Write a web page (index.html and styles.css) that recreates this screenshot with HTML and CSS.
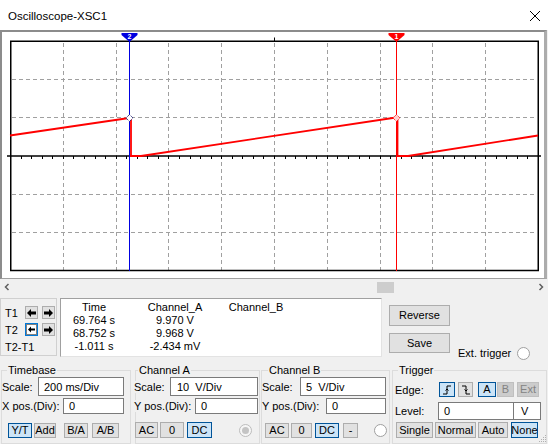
FILE: index.html
```html
<!DOCTYPE html>
<html>
<head>
<meta charset="utf-8">
<title>Oscilloscope-XSC1</title>
<link rel="stylesheet" href="styles.css">
</head>
<body>
<div class="window">
  <div class="titlebar">
    <span class="title">Oscilloscope-XSC1</span>
    <svg class="close" width="10" height="10" viewBox="0 0 10 10"><path d="M0 0L10 10M10 0L0 10" stroke="#000" stroke-width="1"/></svg>
  </div>

  <div class="scope">
    <svg class="plot" width="542" height="246" viewBox="2 32 542 246">
      <g stroke="#a0a0a0" stroke-width="1" stroke-dasharray="4 3" fill="none" shape-rendering="crispEdges">
        <path d="M63.5 43V270M116.5 43V270M168.5 43V270M221.5 43V270M274.5 43V270M327.5 43V270M380.5 43V270M432.5 43V270M485.5 43V270"/>
        <path d="M12 79.5H537M12 117.5H537M12 194.5H537M12 232.5H537"/>
      </g>
      <rect x="10.75" y="41.25" width="527.5" height="229.25" fill="none" stroke="#000" stroke-width="1.5"/>
      <path d="M7 156H541" stroke="#000" stroke-width="1.5"/>
      <path stroke="#000" stroke-width="1" shape-rendering="crispEdges" d="M21.1 156v3M31.6 156v3M42.2 156v3M52.7 156v3M63.3 156v3M73.9 156v3M84.4 156v3M95 156v3M105.5 156v3M116.1 156v3M126.7 156v3M137.2 156v3M147.8 156v3M158.3 156v3M168.9 156v3M179.5 156v3M190 156v3M200.6 156v3M211.1 156v3M221.7 156v3M232.3 156v3M242.8 156v3M253.4 156v3M263.9 156v3M274.5 156v3M285.1 156v3M295.6 156v3M306.2 156v3M316.7 156v3M327.3 156v3M337.9 156v3M348.4 156v3M359 156v3M369.5 156v3M380.1 156v3M390.7 156v3M401.2 156v3M411.8 156v3M422.3 156v3M432.9 156v3M443.5 156v3M454 156v3M464.6 156v3M475.1 156v3M485.7 156v3M496.3 156v3M506.8 156v3M517.4 156v3M527.9 156v3M538.5 155v4"/>
      <path d="M274.5 37.5V41" stroke="#000" stroke-width="1"/>

      <path d="M129.5 35V271" stroke="#0000e0" stroke-width="1"/>
      <path d="M396.5 35V271" stroke="#ff0000" stroke-width="1"/>

      <g stroke="#ff0000" stroke-width="1.8" fill="none">
        <path d="M10 135.5L129 118"/>
        <path d="M131 118.5V156"/>
        <path d="M130 156H141L396 117.5"/>
        <path d="M397.5 117.5V156"/>
        <path d="M397 156H408L538 135.5"/>
      </g>

      <polygon points="129.5,114.5 133,118 129.5,121.5 126,118" fill="#fff" stroke="#000060" stroke-width="1" stroke-dasharray="1 1"/>
      <polygon points="396.5,114.5 400,118 396.5,121.5 393,118" fill="#ffd0d0" stroke="#ff0000" stroke-width="1" stroke-dasharray="1 1"/>

      <polygon points="121.5,33 137.5,33 137.5,35 130,41.5 129,41.5 121.5,35" fill="#0000e0"/>
      <text x="129.5" y="39" class="mk">2</text>
      <polygon points="388.5,33 404.5,33 404.5,35 397,41.5 396,41.5 388.5,35" fill="#ff0000"/>
      <text x="396.5" y="39" class="mk">1</text>
    </svg>
  </div>

  <div class="hscroll">
    <svg class="sb-btn" width="17" height="17" viewBox="0 0 17 17"><path d="M8.5 5L5.5 8L8.5 11" fill="none" stroke="#606060" stroke-width="1.5"/></svg>
    <div class="track"><div class="thumb"></div></div>
    <svg class="sb-btn" width="17" height="17" viewBox="0 0 17 17"><path d="M8.5 5L11.5 8L8.5 11" fill="none" stroke="#606060" stroke-width="1.5"/></svg>
  </div>

  <div class="cursors">
    <div class="cursor-ctrl">
      <div class="crow">
        <span class="clbl">T1</span>
        <span class="abtn"><svg width="9" height="8" viewBox="0 0 9 8"><path d="M0 4L4 0V2.5H9V5.5H4V8Z" fill="#000"/></svg></span>
        <span class="abtn gap"><svg width="9" height="8" viewBox="0 0 9 8"><path d="M9 4L5 0V2.5H0V5.5H5V8Z" fill="#000"/></svg></span>
      </div>
      <div class="crow r-t2">
        <span class="clbl">T2</span>
        <span class="abtn focus"><svg width="11" height="11" viewBox="0 0 11 11"><rect x="0.5" y="0.5" width="10" height="10" fill="none" stroke="#000" stroke-dasharray="1 1"/><path d="M2 5.5L5 2.5V4.5H9V6.5H5V8.5Z" fill="#000"/></svg></span>
        <span class="abtn gap"><svg width="9" height="8" viewBox="0 0 9 8"><path d="M9 4L5 0V2.5H0V5.5H5V8Z" fill="#000"/></svg></span>
      </div>
      <div class="crow r-diff">
        <span class="clbl wide">T2-T1</span>
      </div>
    </div>

    <div class="readout">
      <span>Time</span><span>Channel_A</span><span>Channel_B</span>
      <span>69.764 s</span><span>9.970 V</span><span></span>
      <span>68.752 s</span><span>9.968 V</span><span></span>
      <span>-1.011 s</span><span>-2.434 mV</span><span></span>
    </div>

    <div class="side">
      <div class="side-btns">
        <div class="btn reverse">Reverse</div>
        <div class="btn save">Save</div>
      </div>
      <div class="ext">
        <span>Ext. trigger</span>
        <span class="radio white"></span>
      </div>
    </div>
  </div>

  <div class="controls">
    <div class="group tb">
      <div class="legend">Timebase</div>
      <div class="row r1">
        <span class="lbl w36">Scale:</span>
        <div class="field w86 pad6">200 ms/Div</div>
      </div>
      <div class="row r2">
        <span class="lbl w61">X pos.(Div):</span>
        <div class="field w61 pad6">0</div>
      </div>
      <div class="row r3 h15 mt9">
        <div class="btn sel" style="margin-left:6px;width:24px">Y/T</div>
        <div class="btn" style="margin-left:2px;width:22px">Add</div>
        <div class="btn" style="margin-left:8px;width:24px">B/A</div>
        <div class="btn" style="margin-left:4px;width:27px">A/B</div>
      </div>
    </div>

    <div class="group cha">
      <div class="legend">Channel A</div>
      <div class="row r1">
        <span class="lbl w36 neg2">Scale:</span>
        <div class="field w88 pad7">10&nbsp; V/Div</div>
      </div>
      <div class="row r2">
        <span class="lbl w61 neg2">Y pos.(Div):</span>
        <div class="field w63 pad6">0</div>
      </div>
      <div class="row r3 h16 mt8">
        <div class="btn" style="margin-left:-1px;width:23px">AC</div>
        <div class="btn" style="margin-left:2px;width:24px">0</div>
        <div class="btn sel" style="margin-left:3px;width:25px">DC</div>
        <span class="radio grey" style="margin-left:27px"><span class="dot"></span></span>
      </div>
    </div>

    <div class="group chb">
      <div class="legend">Channel B</div>
      <div class="row r1">
        <span class="lbl w38">Scale:</span>
        <div class="field w86 pad6">5&nbsp; V/Div</div>
      </div>
      <div class="row r2">
        <span class="lbl w64">Y pos.(Div):</span>
        <div class="field w60 pad6">0</div>
      </div>
      <div class="row r3 h15 mt9">
        <div class="btn" style="margin-left:3px;width:24px">AC</div>
        <div class="btn" style="margin-left:2px;width:21px">0</div>
        <div class="btn sel" style="margin-left:3px;width:24px">DC</div>
        <div class="btn" style="margin-left:4px;width:15px">-</div>
        <span class="radio white" style="margin-left:16px"></span>
      </div>
    </div>

    <div class="group trg">
      <div class="legend">Trigger</div>
      <div class="row t1">
        <span class="lbl tl">Edge:</span>
        <div class="btn sel" style="width:16px"><svg width="10" height="10" viewBox="0 0 10 10"><path d="M1 9H5V1H9M3.5 5.5L5 4L6.5 5.5" fill="none" stroke="#000" stroke-width="1"/></svg></div>
        <div class="btn" style="margin-left:3px;width:15px"><svg width="10" height="10" viewBox="0 0 10 10"><path d="M1 1H5V9H9M3.5 4.5L5 6L6.5 4.5" fill="none" stroke="#000" stroke-width="1"/></svg></div>
        <div class="btn sel" style="margin-left:5px;width:18px">A</div>
        <div class="btn dis" style="margin-left:1px;width:17px">B</div>
        <div class="btn dis" style="margin-left:3px;width:22px">Ext</div>
      </div>
      <div class="row t2">
        <span class="lbl tl2">Level:</span>
        <div class="field w76 pad6">0</div>
        <div class="field vbox">V</div>
      </div>
      <div class="row r3 h16 mt2">
        <div class="btn" style="margin-left:3px;width:37px">Single</div>
        <div class="btn" style="margin-left:2px;width:41px">Normal</div>
        <div class="btn" style="margin-left:2px;width:30px">Auto</div>
        <div class="btn sel" style="margin-left:3px;width:27px">None</div>
      </div>
    </div>
  </div>

  <svg class="grip" width="8" height="8" viewBox="0 0 8 8">
    <g fill="#b0b0b0"><rect x="6" y="0" width="1" height="1"/><rect x="4" y="2" width="1" height="1"/><rect x="6" y="2" width="1" height="1"/><rect x="2" y="4" width="1" height="1"/><rect x="4" y="4" width="1" height="1"/><rect x="6" y="4" width="1" height="1"/><rect x="0" y="6" width="1" height="1"/><rect x="2" y="6" width="1" height="1"/><rect x="4" y="6" width="1" height="1"/><rect x="6" y="6" width="1" height="1"/></g>
  </svg>
</div>
</body>
</html>
```

FILE: styles.css
```css
* { box-sizing: border-box; }

body {
  margin: 0;
  background: #f0f0f0;
  font-family: "Liberation Sans", Arial, sans-serif;
  font-size: 11px;
  color: #000;
}

.window {
  position: relative;
  width: 548px;
  height: 444px;
  overflow: hidden;
  background: #f0f0f0;
}

/* title bar */
.titlebar {
  height: 30px;
  background: #fff;
  display: flex;
  align-items: center;
  justify-content: space-between;
  padding: 1px 8px 0 8px;
}
.title { font-size: 11.5px; }
.close { display: block; }

/* scope display */
.scope {
  width: 547px;
  height: 249px;
  border-style: solid;
  border-width: 2px 3px 1px 2px;
  border-color: #8c8c8c #acacac #a0a0a0 #8c8c8c;
  background: #fff;
}
.plot { display: block; }
.mk {
  font-family: "Liberation Sans", Arial, sans-serif;
  font-size: 7px;
  font-weight: bold;
  fill: #fff;
  text-anchor: middle;
}

/* horizontal scrollbar */
.hscroll {
  height: 17px;
  display: flex;
  align-items: center;
}
.sb-btn { display: block; flex: none; }
.track {
  flex: 1;
  height: 17px;
  display: flex;
  align-items: center;
}
.thumb {
  margin-left: 360px;
  width: 17px;
  height: 11px;
  background: #cdcdcd;
}

/* cursor area */
.cursors {
  height: 64px;
  display: flex;
}
.cursor-ctrl {
  flex: none;
  margin-top: 2px;
  width: 57px;
  height: 58px;
  border: 1px solid #d0d0d0;
  padding-top: 7px;
}
.crow {
  display: flex;
  align-items: center;
  height: 13px;
}
.r-t2 { margin-top: 4px; }
.r-diff { margin-top: 4px; height: 14px; }
.clbl { width: 24px; padding-left: 4px; flex: none; white-space: nowrap; }
.clbl.wide { width: auto; }
.abtn {
  width: 13px;
  height: 13px;
  flex: none;
  border: 1px solid #adadad;
  background: #e1e1e1;
  display: flex;
  align-items: center;
  justify-content: center;
}
.abtn svg { display: block; }
.abtn.gap { margin-left: 4px; }
.abtn.focus {
  border-color: #0078d7;
  background: #fff;
}

.readout {
  flex: none;
  margin-top: 2px;
  margin-left: 3px;
  width: 322px;
  height: 59px;
  background: #fff;
  border: 1px solid;
  border-color: #a0a0a0 #e3e3e3 #e3e3e3 #a0a0a0;
  padding-top: 2px;
  display: grid;
  grid-template-columns: 66px 96px 66px;
  grid-auto-rows: 13px;
  align-content: start;
  line-height: 13px;
  text-align: center;
  white-space: nowrap;
}

.side {
  display: flex;
  margin-left: 7px;
}
.side-btns {
  display: flex;
  flex-direction: column;
  padding-top: 9px;
}
.ext {
  align-self: flex-end;
  margin-left: 8px;
  height: 14px;
  display: flex;
  align-items: center;
  white-space: nowrap;
}
.ext .radio { margin-left: 6px; }

/* buttons */
.btn {
  flex: none;
  background: #e1e1e1;
  border: 1px solid #adadad;
  display: flex;
  align-items: center;
  justify-content: center;
  line-height: 1;
  white-space: nowrap;
  height: 100%;
}
.side-btns .reverse { width: 61px; height: 21px; }
.side-btns .save { width: 61px; height: 20px; margin-top: 7px; }
.btn svg { display: block; }
.btn.sel {
  background: #cce4f7;
  border-color: #005499;
}
.btn.dis {
  background: #cccccc;
  border-color: #bfbfbf;
  color: #838383;
}

/* radios */
.radio {
  flex: none;
  width: 13px;
  height: 13px;
  border-radius: 50%;
  border: 1px solid #a0a0a0;
  background: #fff;
  display: flex;
  align-items: center;
  justify-content: center;
}
.radio.grey {
  border-color: #bcbcbc;
  background: #f6f6f6;
}
.radio .dot {
  width: 7px;
  height: 7px;
  border-radius: 50%;
  background: #c4c4c4;
}

/* control groups */
.controls {
  display: flex;
  align-items: flex-start;
}
.group {
  flex: none;
  margin-top: 10px;
  height: 74px;
  border: 1px solid #dcdcdc;
}
.tb { margin-left: 1px; width: 130px; }
.cha { margin-left: 4px; width: 125px; }
.chb { margin-left: 1px; width: 129px; }
.trg { margin-left: 2px; width: 155px; }

.legend {
  width: max-content;
  margin-top: -7px;
  height: 13px;
  line-height: 13px;
  padding: 0 1px;
  background: #f0f0f0;
}
.tb .legend { margin-left: 5px; }
.cha .legend { margin-left: 2px; }
.chb .legend { margin-left: 6px; }
.trg .legend { margin-left: 5px; }

.row {
  display: flex;
  align-items: center;
}
.r1 { height: 19px; }
.r2 { height: 16px; margin-top: 2px; }
.h15 { height: 15px; }
.h16 { height: 16px; }
.mt9 { margin-top: 9px; }
.mt8 { margin-top: 8px; }
.mt2 { margin-top: 2px; }
.t1 { height: 15px; margin-top: 5px; }
.t2 { height: 18px; margin-top: 5px; }

.lbl {
  flex: none;
  white-space: nowrap;
  background: #f0f0f0;
}
.neg2 { margin-left: -2px; }
.w36 { width: 36px; }
.w38 { width: 38px; }
.w61 { width: 61px; }
.w64 { width: 64px; }
.tl { margin-left: 2px; width: 44px; }
.tl2 { margin-left: 2px; width: 43px; }

.field {
  flex: none;
  height: 100%;
  background: #fff;
  border: 1px solid #7a7a7a;
  display: flex;
  align-items: center;
  white-space: nowrap;
}
.w86 { width: 86px; }
.w88 { width: 88px; }
.w61.field { width: 61px; }
.w63 { width: 63px; }
.w60 { width: 60px; }
.w76 { width: 76px; }
.pad6 { padding-left: 5px; }
.pad7 { padding-left: 6px; }
.vbox {
  margin-left: -1px;
  width: 28px;
  padding-left: 7px;
}

.grip {
  position: absolute;
  right: 1px;
  bottom: 1px;
  display: block;
}
```
